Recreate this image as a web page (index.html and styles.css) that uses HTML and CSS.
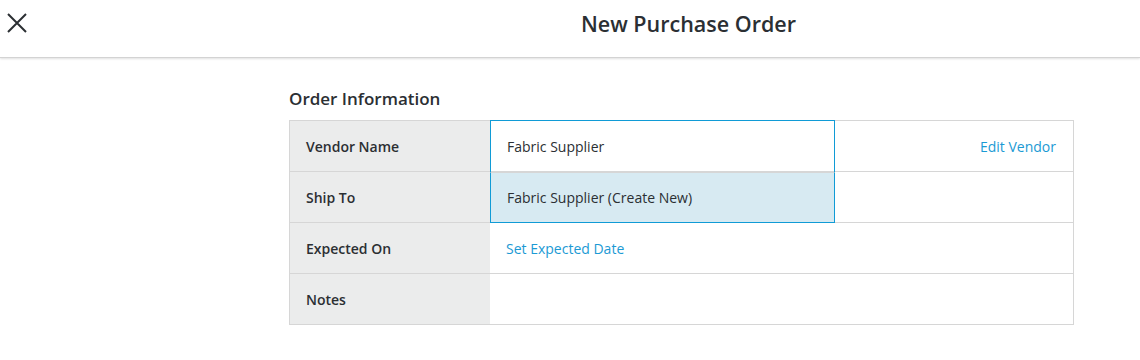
FILE: index.html
```html
<!DOCTYPE html>
<html lang="en">
<head>
    <meta charset="UTF-8">
    <title>New Purchase Order</title>
    <link rel="stylesheet" href="styles.css">
</head>
<body>
    <div class="header">
        <span class="close">
            <svg width="20" height="20" viewBox="0 0 20 20">
                <path d="M1 1 L19 19 M19 1 L1 19" stroke="#2b2f33" stroke-width="2" fill="none"/>
            </svg>
        </span>
        <h1 class="title">New Purchase Order</h1>
    </div>
    <div class="content">
        <h2 class="section">Order Information</h2>
        <div class="table">
            <div class="row">
                <label class="name">Vendor Name</label>
                <div class="value field">Fabric Supplier</div>
                <div class="extra"><a class="link">Edit Vendor</a></div>
            </div>
            <div class="row">
                <label class="name">Ship To</label>
                <div class="value suggest">Fabric Supplier (Create New)</div>
                <div class="extra"></div>
            </div>
            <div class="row">
                <label class="name">Expected On</label>
                <div class="value wide"><a class="link">Set Expected Date</a></div>
            </div>
            <div class="row">
                <label class="name">Notes</label>
                <div class="value wide"></div>
            </div>
        </div>
    </div>
</body>
</html>
```

FILE: styles.css
```css
body
{
    margin: 0;
    font-family: "Open Sans", "Liberation Sans", sans-serif;
    color: #2b2f33;
    background: #fff;
}
.header
{
    display: flex;
    align-items: center;
    height: 57px;
    border-bottom: 1px solid #d3d3d3;
    box-shadow: 0 1px 2px rgba(0, 0, 0, 0.12);
}
.close
{
    display: flex;
    width: 20px;
    height: 20px;
    margin-left: 7px;
    margin-top: -12px;
    cursor: pointer;
}
.title
{
    flex: 1;
    margin: -11px 0 0 210px;
    text-align: center;
    font-size: 21.5px;
    font-weight: 600;
}
.content
{
    width: 785px;
    margin-left: 289px;
    padding-top: 29px;
}
.section
{
    margin: 0 0 9px;
    font-size: 17px;
    font-weight: 600;
    line-height: 24px;
}
.table
{
    border: 1px solid #d6d6d6;
    border-bottom: none;
}
.row
{
    display: grid;
    grid-template-columns: 200px 345px 1fr;
    height: 51px;
    border-bottom: 1px solid #d6d6d6;
    box-sizing: border-box;
    font-size: 14px;
}
.name
{
    display: flex;
    align-items: center;
    padding-left: 16px;
    background: #ebecec;
    font-weight: 600;
}
.value
{
    display: flex;
    align-items: center;
    padding-left: 16px;
    box-sizing: border-box;
}
.wide
{
    grid-column: 2 / 4;
}
.field
{
    border: 1px solid #109bd6;
    border-bottom: none;
    margin-top: -1px;
    margin-bottom: -1px;
}
.suggest
{
    background: #d7eaf2;
    border: 1px solid #109bd6;
    border-top: 1px solid #d6d6d6;
    margin-bottom: -1px;
}
.extra
{
    display: flex;
    align-items: center;
    justify-content: flex-end;
    padding-right: 17px;
}
.link
{
    color: #1b9ad4;
    cursor: pointer;
}
```
